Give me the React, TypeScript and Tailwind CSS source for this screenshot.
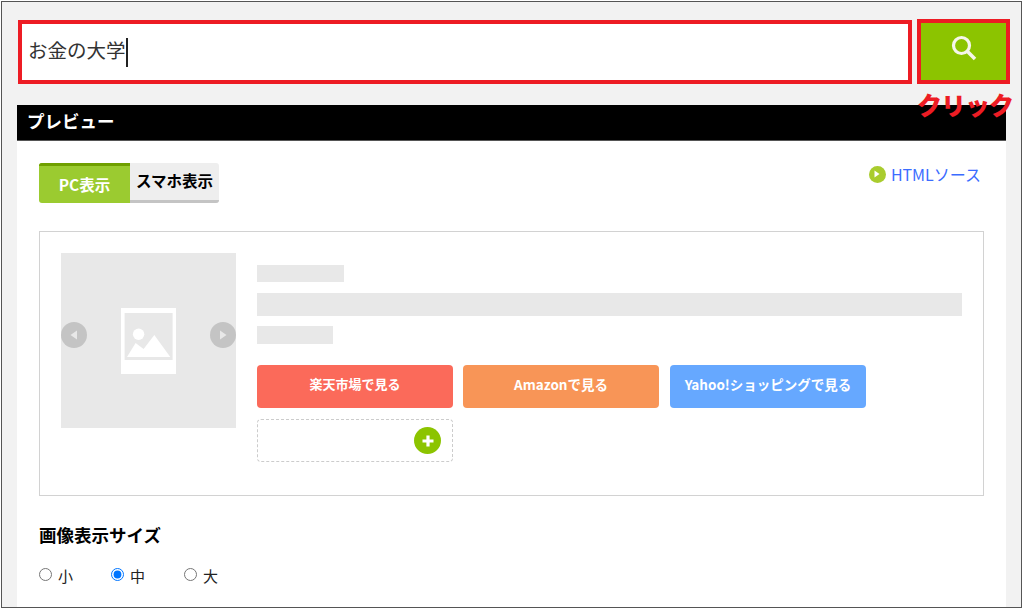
import React from 'react';

const jp = { fontFamily: '"Noto Sans CJK JP", "Liberation Sans", sans-serif' };

const Bar = ({ className }: { className: string }) => <div className={`bg-[#e8e8e8] ${className}`} />;

const Arrow = ({ flip }: { flip?: boolean }) => (
  <div className={`absolute top-[69px] w-[26px] h-[26px] rounded-full bg-[#c4c4c4] flex items-center justify-center ${flip ? 'right-0' : 'left-0'}`}>
    <svg width="8" height="10" viewBox="0 0 8 10">
      <path d={flip ? 'M1 0.5 L7.5 5 L1 9.5 Z' : 'M7 0.5 L0.5 5 L7 9.5 Z'} fill="#e8e8e8" />
    </svg>
  </div>
);

const Shop = ({ color, className, children }: { color: string; className: string; children: React.ReactNode }) => (
  <a className={`w-[196px] h-[43px] rounded-[4px] flex items-center justify-center pb-[5px] text-white font-bold ${color} ${className}`}>{children}</a>
);

const Radio = ({ label, checked, className }: { label: string; checked?: boolean; className: string }) => (
  <label className={`flex items-center ${className}`}>
    <input type="radio" name="size" defaultChecked={checked} className="w-[13px] h-[13px] m-0 mr-[6px] accent-[#0075ff]" />
    <span className="text-[15px] text-[#222] leading-none mt-[2px]">{label}</span>
  </label>
);

export default function App() {
  return (
    <div style={jp} className="w-[1024px] h-[609px] overflow-hidden bg-white p-px">
      <div className="w-[1021px] h-[607px] border border-[#555] bg-[#f2f2f2] overflow-hidden pl-[15px] pt-[18px]">
        <div className="flex h-[64px] w-[993px]">
          <div className="w-[895px] h-[64px] ml-px border-4 border-[#ed1c24] bg-white flex items-center pl-[6px] pb-[4px]">
            <span className="text-[19.5px] text-[#333]">お金の大学</span>
            <span className="w-[2px] h-[29px] mt-[4px] bg-[#222]" />
          </div>
          <button className="w-[93px] h-[65px] -mt-px ml-[5px] border-4 border-[#ed1c24] bg-[#8cc400] flex items-center justify-center">
            <svg width="28" height="28" viewBox="0 0 28 28" fill="none" stroke="#f6f6ea" className="-mt-[7px]">
              <circle cx="11.5" cy="11.5" r="8" strokeWidth="3.2" />
              <path d="M17.5 17.5 L25 25" strokeWidth="3.6" />
            </svg>
          </button>
        </div>
        <div className="relative mt-[21px] w-[989px] h-[36px] bg-black border-b border-[#555] flex items-center pl-[10px] pb-[3px]">
          <span className="text-white text-[17.5px] font-bold">プレビュー</span>
          <span className="absolute left-[900px] top-[-19px] text-[#ed1c24] text-[25px] font-black whitespace-nowrap tracking-[-1px] z-10">クリック</span>
        </div>
        <div className="w-[989px] h-[470px] bg-white pt-[22px] px-[22px]">
          <div className="flex justify-between w-[945px]">
            <div className="flex w-[180px] h-[40px] text-[15.5px] font-bold rounded-[3px] overflow-hidden">
              <div className="w-[91px] bg-[#9bcb30] border-t-[3px] border-[#6f9f00] text-white flex items-center justify-center">PC表示</div>
              <div className="flex-1 bg-[#eeeeee] border-b-[3px] border-[#c4c4c4] text-black flex items-center justify-center pb-px">スマホ表示</div>
            </div>
            <a className="flex items-center h-[22px] mr-[3px] text-[16px] text-[#3b6cff]">
              <span className="w-[17px] h-[17px] rounded-full bg-[#a9cc2e] flex items-center justify-center mr-[5px]">
                <svg width="6" height="8" viewBox="0 0 6 8"><path d="M0.5 0.5 L5.5 4 L0.5 7.5 Z" fill="#fff" /></svg>
              </span>
              HTMLソース
            </a>
          </div>
          <div className="mt-[28px] w-[945px] h-[265px] border border-[#d2d2d2] p-[21px] flex">
            <div className="relative w-[175px] h-[175px] bg-[#e8e8e8] flex items-center justify-center">
              <svg width="55" height="66" viewBox="0 0 55 66" className="-ml-px">
                <rect width="55" height="66" fill="#fff" />
                <rect x="3.6" y="5" width="48" height="47" fill="#e8e8e8" />
                <circle cx="17.6" cy="26.3" r="5.7" fill="#fff" />
                <path d="M6 49 L14.6 35 L22.6 41 L33.3 27 L49.3 49 Z" fill="#fff" />
              </svg>
              <Arrow />
              <Arrow flip />
            </div>
            <div className="ml-[21px] pt-[12px]">
              <Bar className="w-[87px] h-[17px]" />
              <Bar className="w-[705px] h-[23px] mt-[11px]" />
              <Bar className="w-[76px] h-[18px] mt-[10px]" />
              <div className="flex mt-[21px]">
                <Shop color="bg-[#fb6a5a]" className="text-[13px]">楽天市場で見る</Shop>
                <Shop color="bg-[#f89557]" className="text-[13.5px] ml-[10px]">Amazonで見る</Shop>
                <Shop color="bg-[#66a8ff]" className="text-[13.5px] ml-[11px]">Yahoo!ショッピングで見る</Shop>
              </div>
              <div className="mt-[11px] w-[196px] h-[43px] rounded-[4px] border border-dashed border-[#cccccc] flex items-center justify-end pr-[11px]">
                <span className="w-[27px] h-[27px] rounded-full bg-[#8cc400] flex items-center justify-center">
                  <svg width="14" height="14" viewBox="0 0 14 14"><path d="M7 1.5 V12.5 M1.5 7 H12.5" stroke="#fff" strokeWidth="3.2" /></svg>
                </span>
              </div>
            </div>
          </div>
          <div className="mt-[27px] text-[17.5px] font-bold text-black leading-[24px]">画像表示サイズ</div>
          <div className="flex mt-[17px] h-[20px]">
            <Radio label="小" className="w-[72px]" />
            <Radio label="中" checked className="w-[73px]" />
            <Radio label="大" className="w-[60px]" />
          </div>
        </div>
      </div>
    </div>
  );
}
